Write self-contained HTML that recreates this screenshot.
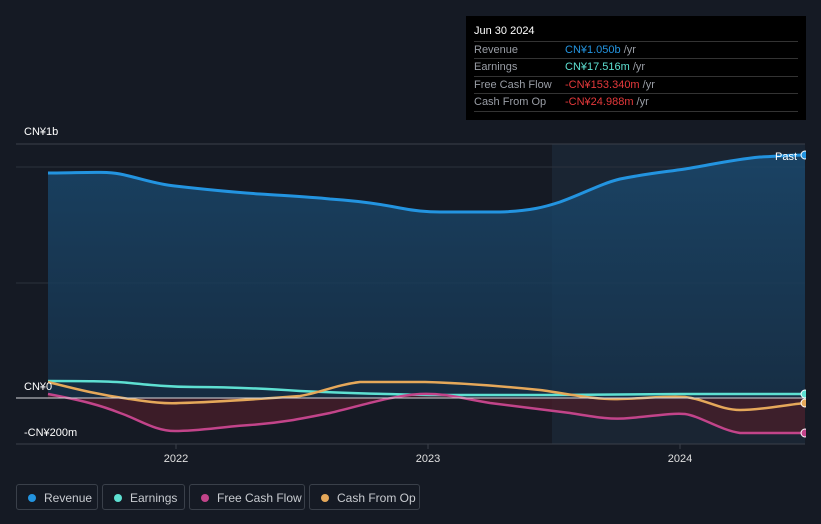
<!DOCTYPE html>
<html><head><meta charset="utf-8"><style>
html,body{margin:0;padding:0;background:#151a24;width:821px;height:524px;overflow:hidden;font-family:"Liberation Sans","Noto Sans CJK SC",sans-serif;}
.tt{position:absolute;left:466px;top:16px;width:340px;height:104px;background:#000;color:#fff;font-size:11px;}
.tt .h{position:absolute;left:8px;top:9px;font-size:11px;}
.tt .r{position:absolute;left:8px;width:324px;border-top:1px solid #333;height:17px;line-height:17px;color:#9a9ea6;}
.tt .r span{position:absolute;left:91px;}
.leg{position:absolute;top:484px;height:26px;border:1px solid #3a404a;border-radius:3px;color:#c8cbd0;font-size:12px;line-height:26px;box-sizing:border-box;}
.leg i{position:absolute;left:11px;top:9px;width:8px;height:8px;border-radius:50%;}
.leg b{font-weight:normal;position:absolute;left:27px;}
</style></head><body>
<svg width="821" height="524" style="position:absolute;left:0;top:0">
<defs>
<linearGradient id="rg" x1="0" y1="0" x2="0" y2="1"><stop offset="0" stop-color="#1a4a70" stop-opacity=".8"/><stop offset="1" stop-color="#163048" stop-opacity=".8"/></linearGradient>
</defs>
<rect x="552" y="144" width="253" height="300" fill="#1a2533"/>
<line x1="16" y1="144" x2="805" y2="144" stroke="#3a404a"/>
<line x1="16" y1="167" x2="805" y2="167" stroke="#2a313c"/>
<line x1="16" y1="283" x2="805" y2="283" stroke="#2a313c"/>
<line x1="16" y1="444" x2="805" y2="444" stroke="#3a404a"/>
<line x1="176" y1="444" x2="176" y2="449" stroke="#3a404a"/>
<line x1="428" y1="444" x2="428" y2="449" stroke="#3a404a"/>
<line x1="680" y1="444" x2="680" y2="449" stroke="#3a404a"/>
<path d="M48,173 C80,173 105,171 120,174 C140,178 155,184 175,186 C210,190 230,192 260,194 C290,196 310,197 330,199 C360,201 380,204 400,208 C415,211 425,212 440,212 L500,212 C530,211 545,207 560,202 C585,193 600,184 620,179 C650,173 665,172 685,169 C710,165 730,160 760,157 C780,156 790,155 805,155 L805,398 L48,398 Z" fill="url(#rg)"/>
<path d="M48,394 C80,400 100,405 120,413 C140,420 155,431 175,431 C200,431 220,427 250,425 C280,423 300,419 330,413 C360,406 390,396 420,394 C445,393 460,398 490,403 C520,407 540,409 570,413 C595,417 610,420 630,418 C655,416 670,413 685,414 C700,416 720,430 740,433 L805,433 L805,398 L48,398 Z" fill="#4a1e2a" opacity=".75"/>
<path d="M48,381 C80,381 110,381 130,383 C150,385 170,387 195,387 C230,387 270,389 300,391 C340,393 380,394 430,395 L550,395 C600,395 640,394 680,394 L805,394" fill="none" stroke="#5ee0d2" stroke-width="2.5"/>
<path d="M48,382 C80,390 100,395 130,399 C150,402 165,404 180,403 C220,402 260,399 300,396 C320,393 335,385 360,382 L425,382 C460,383 500,386 540,390 C570,394 595,400 620,399 C650,398 665,396 685,397 C705,399 720,410 740,410 C760,410 785,405 805,403" fill="none" stroke="#e5a85a" stroke-width="2.5"/>
<path d="M48,394 C80,400 100,405 120,413 C140,420 155,431 175,431 C200,431 220,427 250,425 C280,423 300,419 330,413 C360,406 390,396 420,394 C445,393 460,398 490,403 C520,407 540,409 570,413 C595,417 610,420 630,418 C655,416 670,413 685,414 C700,416 720,430 740,433 L805,433" fill="none" stroke="#c2448a" stroke-width="2.5"/>
<path d="M48,173 C80,173 105,171 120,174 C140,178 155,184 175,186 C210,190 230,192 260,194 C290,196 310,197 330,199 C360,201 380,204 400,208 C415,211 425,212 440,212 L500,212 C530,211 545,207 560,202 C585,193 600,184 620,179 C650,173 665,172 685,169 C710,165 730,160 760,157 C780,156 790,155 805,155" fill="none" stroke="#2394e0" stroke-width="3"/>
<line x1="16" y1="398" x2="805" y2="398" stroke="#d8d8dc" stroke-width="1"/>
<circle cx="805" cy="155" r="4" fill="#2394e0" stroke="#fff" stroke-width="1"/>
<circle cx="805" cy="394" r="4" fill="#5ee0d2" stroke="#fff" stroke-width="1"/>
<circle cx="805" cy="403" r="4" fill="#e5a85a" stroke="#fff" stroke-width="1"/>
<circle cx="805" cy="433" r="4" fill="#c2448a" stroke="#fff" stroke-width="1"/>
<rect x="0" y="144" width="16" height="300" fill="#151a24"/>
<rect x="806" y="144" width="15" height="300" fill="#151a24"/>
<g font-family="Liberation Sans, Noto Sans CJK SC, sans-serif" font-size="11" fill="#fff">
<text x="24" y="135">CN¥1b</text>
<text x="24" y="390">CN¥0</text>
<text x="24" y="436">-CN¥200m</text>
<text x="775" y="160">Past</text>
<text x="176" y="462" text-anchor="middle" fill="#e0e0e0">2022</text>
<text x="428" y="462" text-anchor="middle" fill="#e0e0e0">2023</text>
<text x="680" y="462" text-anchor="middle" fill="#e0e0e0">2024</text>
</g>
</svg>
<div class="tt">
<div class="h">Jun 30 2024</div>
<div class="r" style="top:25px">Revenue<span style="color:#2394e0">CN¥1.050b <span style="position:static;color:#9a9ea6">/yr</span></span></div>
<div class="r" style="top:42px">Earnings<span style="color:#5ee0d2">CN¥17.516m <span style="position:static;color:#9a9ea6">/yr</span></span></div>
<div class="r" style="top:60px">Free Cash Flow<span style="color:#e5393b">-CN¥153.340m <span style="position:static;color:#9a9ea6">/yr</span></span></div>
<div class="r" style="top:77px">Cash From Op<span style="color:#e5393b">-CN¥24.988m <span style="position:static;color:#9a9ea6">/yr</span></span></div>
<div class="r" style="top:95px;height:0"></div>
</div>
<div class="leg" style="left:16px;width:82px"><i style="background:#2394e0"></i><b>Revenue</b></div>
<div class="leg" style="left:102px;width:83px"><i style="background:#5ee0d2"></i><b>Earnings</b></div>
<div class="leg" style="left:189px;width:116px"><i style="background:#c2448a"></i><b>Free Cash Flow</b></div>
<div class="leg" style="left:309px;width:111px"><i style="background:#e5a85a"></i><b>Cash From Op</b></div>
</body></html>
